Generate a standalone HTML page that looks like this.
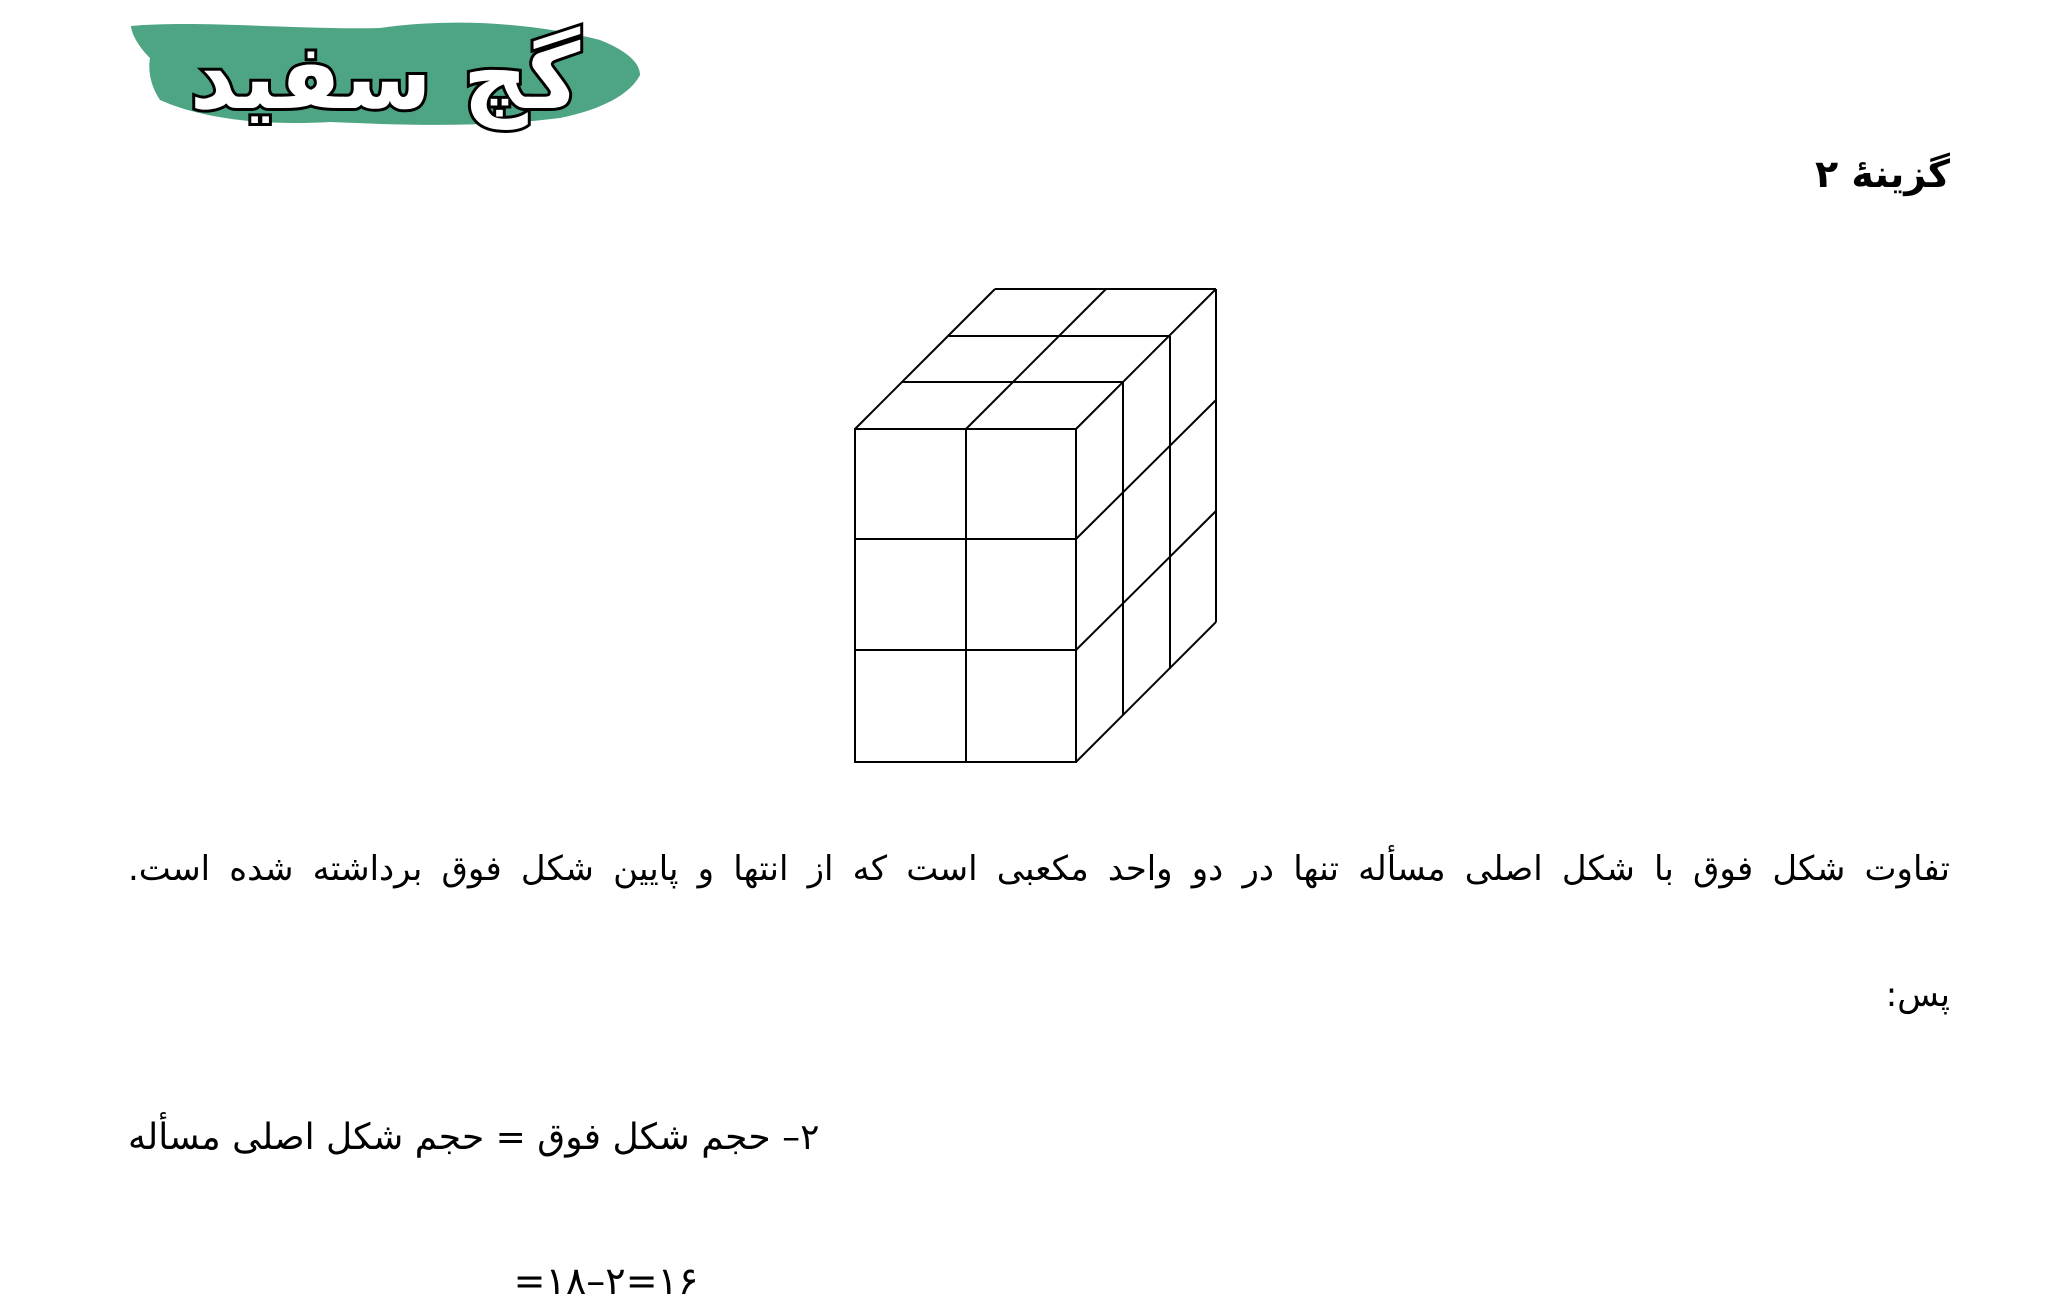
<!DOCTYPE html>
<html><head><meta charset="utf-8"><style>
html,body{margin:0;padding:0;background:#fff;width:2067px;height:1300px;overflow:hidden;position:relative}
.t{position:absolute;font-family:"DejaVu Sans","Liberation Sans",sans-serif;color:#000;white-space:nowrap;line-height:1}
</style></head><body>
<svg style="position:absolute;left:0;top:0" width="2067" height="1300">
<path d="M131 26 C200 20 300 30 380 28 C450 18 530 22 600 40 C625 50 640 62 640 75 C630 95 600 110 560 118 C480 128 400 125 330 122 C260 126 200 118 160 100 C150 85 148 70 150 58 C140 48 132 36 131 26Z" fill="#4ea584"/>
<text x="385" y="108" text-anchor="middle" font-family="DejaVu Sans" font-weight="bold" font-size="90" fill="#fff" stroke="#000" stroke-width="6" paint-order="stroke" direction="rtl">گچ سفید</text>
<g stroke="#000" stroke-width="2" fill="none" transform="translate(-1,0)">
<rect x="856" y="429" width="221" height="333"/>
<line x1="967" y1="429" x2="967" y2="762"/>
<line x1="856" y1="539" x2="1077" y2="539"/>
<line x1="856" y1="650" x2="1077" y2="650"/>
<line x1="903" y1="382" x2="1124" y2="382"/>
<line x1="950" y1="336" x2="1171" y2="336"/>
<line x1="996" y1="289" x2="1217" y2="289"/>
<line x1="856" y1="429" x2="996" y2="289"/>
<line x1="967" y1="429" x2="1107" y2="289"/>
<line x1="1077" y1="429" x2="1217" y2="289"/>
<line x1="1124" y1="382" x2="1124" y2="715"/>
<line x1="1171" y1="336" x2="1171" y2="669"/>
<line x1="1217" y1="289" x2="1217" y2="622"/>
<line x1="1077" y1="539" x2="1217" y2="400"/>
<line x1="1077" y1="650" x2="1217" y2="511"/>
<line x1="1077" y1="762" x2="1217" y2="622"/>
</g>
</svg>
<div class="t" style="right:117px;top:155px;font-size:38px;font-weight:bold;direction:rtl">گزینهٔ ۲</div>
<div class="t" style="left:128px;top:852px;width:1822px;font-size:34px;direction:rtl;text-align:justify;text-align-last:justify;white-space:normal">تفاوت شکل فوق با شکل اصلی مسأله تنها در دو واحد مکعبی است که از انتها و پایین شکل فوق برداشته شده است.</div>
<div class="t" style="right:117px;top:978px;font-size:34px;direction:rtl">پس:</div>
<div class="t" style="left:128px;top:1120px;font-size:36px"><span style="direction:rtl;unicode-bidi:bidi-override">۲– حجم شکل فوق = حجم شکل اصلی مسأله</span></div>
<div class="t" style="left:490px;top:1262px;width:232px;font-size:38px;letter-spacing:4px;text-align:center;direction:ltr;unicode-bidi:bidi-override">=۱۸–۲=۱۶</div>
</body></html>
